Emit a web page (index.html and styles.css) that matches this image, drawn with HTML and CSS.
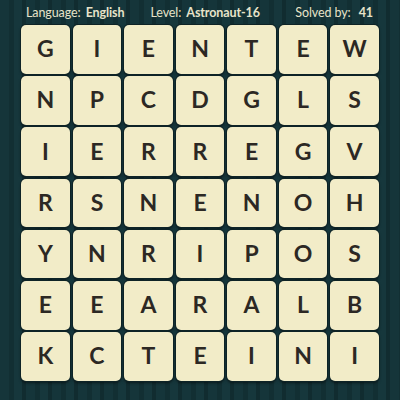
FILE: index.html
```html
<!DOCTYPE html>
<html>
<head>
<meta charset="utf-8">
<link rel="stylesheet" href="styles.css">
</head>
<body>
<div class="page">
  <div class="header">
    <span class="item lang">Language: <b>English</b></span>
    <span class="item level">Level: <b>Astronaut-16</b></span>
    <span class="item solved">Solved by: <b>41</b></span>
  </div>
  <div class="grid">
    <div class="tile">G</div><div class="tile">I</div><div class="tile">E</div><div class="tile">N</div><div class="tile">T</div><div class="tile">E</div><div class="tile">W</div>
    <div class="tile">N</div><div class="tile">P</div><div class="tile">C</div><div class="tile">D</div><div class="tile">G</div><div class="tile">L</div><div class="tile">S</div>
    <div class="tile">I</div><div class="tile">E</div><div class="tile">R</div><div class="tile">R</div><div class="tile">E</div><div class="tile">G</div><div class="tile">V</div>
    <div class="tile">R</div><div class="tile">S</div><div class="tile">N</div><div class="tile">E</div><div class="tile">N</div><div class="tile">O</div><div class="tile">H</div>
    <div class="tile">Y</div><div class="tile">N</div><div class="tile">R</div><div class="tile">I</div><div class="tile">P</div><div class="tile">O</div><div class="tile">S</div>
    <div class="tile">E</div><div class="tile">E</div><div class="tile">A</div><div class="tile">R</div><div class="tile">A</div><div class="tile">L</div><div class="tile">B</div>
    <div class="tile">K</div><div class="tile">C</div><div class="tile">T</div><div class="tile">E</div><div class="tile">I</div><div class="tile">N</div><div class="tile">I</div>
  </div>
</div>
</body>
</html>
```
FILE: styles.css
```css
html, body {
  margin: 0;
  padding: 0;
}
body {
  width: 400px;
  height: 400px;
  overflow: hidden;
  background-color: #14333a;
  background-image: repeating-linear-gradient(90deg,
    #15353a 0px, #15353a 9px,
    #122f33 9px, #122f33 14px,
    #16373c 14px, #16373c 22px,
    #112c30 22px, #112c30 26px);
  font-family: "Lato", "Open Sans", sans-serif;
}
.page {
  width: 400px;
  height: 400px;
  display: flex;
  flex-direction: column;
}
.header {
  height: 25px;
  display: flex;
  align-items: center;
  padding-left: 26px;
  color: #e7e3c9;
  font-size: 12.5px;
  letter-spacing: -0.1px;
  white-space: nowrap;
}
.header b {
  font-weight: 700;
  margin-left: 2px;
}
.level {
  margin-left: 26px;
}
.solved {
  margin-left: auto;
  margin-right: 27px;
}
.solved b {
  margin-left: 5px;
}
.grid {
  margin-left: 21px;
  width: 358px;
  display: grid;
  grid-template-columns: repeat(7, 1fr);
  grid-auto-rows: 48.6px;
  gap: 2.6px;
}
.tile {
  background: #f2ecc8;
  border-radius: 5px;
  box-shadow: 0 0 0 1px #0e2326, 0 2px 3px rgba(0,0,0,0.5);
  display: flex;
  align-items: center;
  justify-content: center;
  color: #2c2824;
  font-size: 23px;
  font-weight: 700;
  padding-bottom: 2px;
  box-sizing: border-box;
}
```
